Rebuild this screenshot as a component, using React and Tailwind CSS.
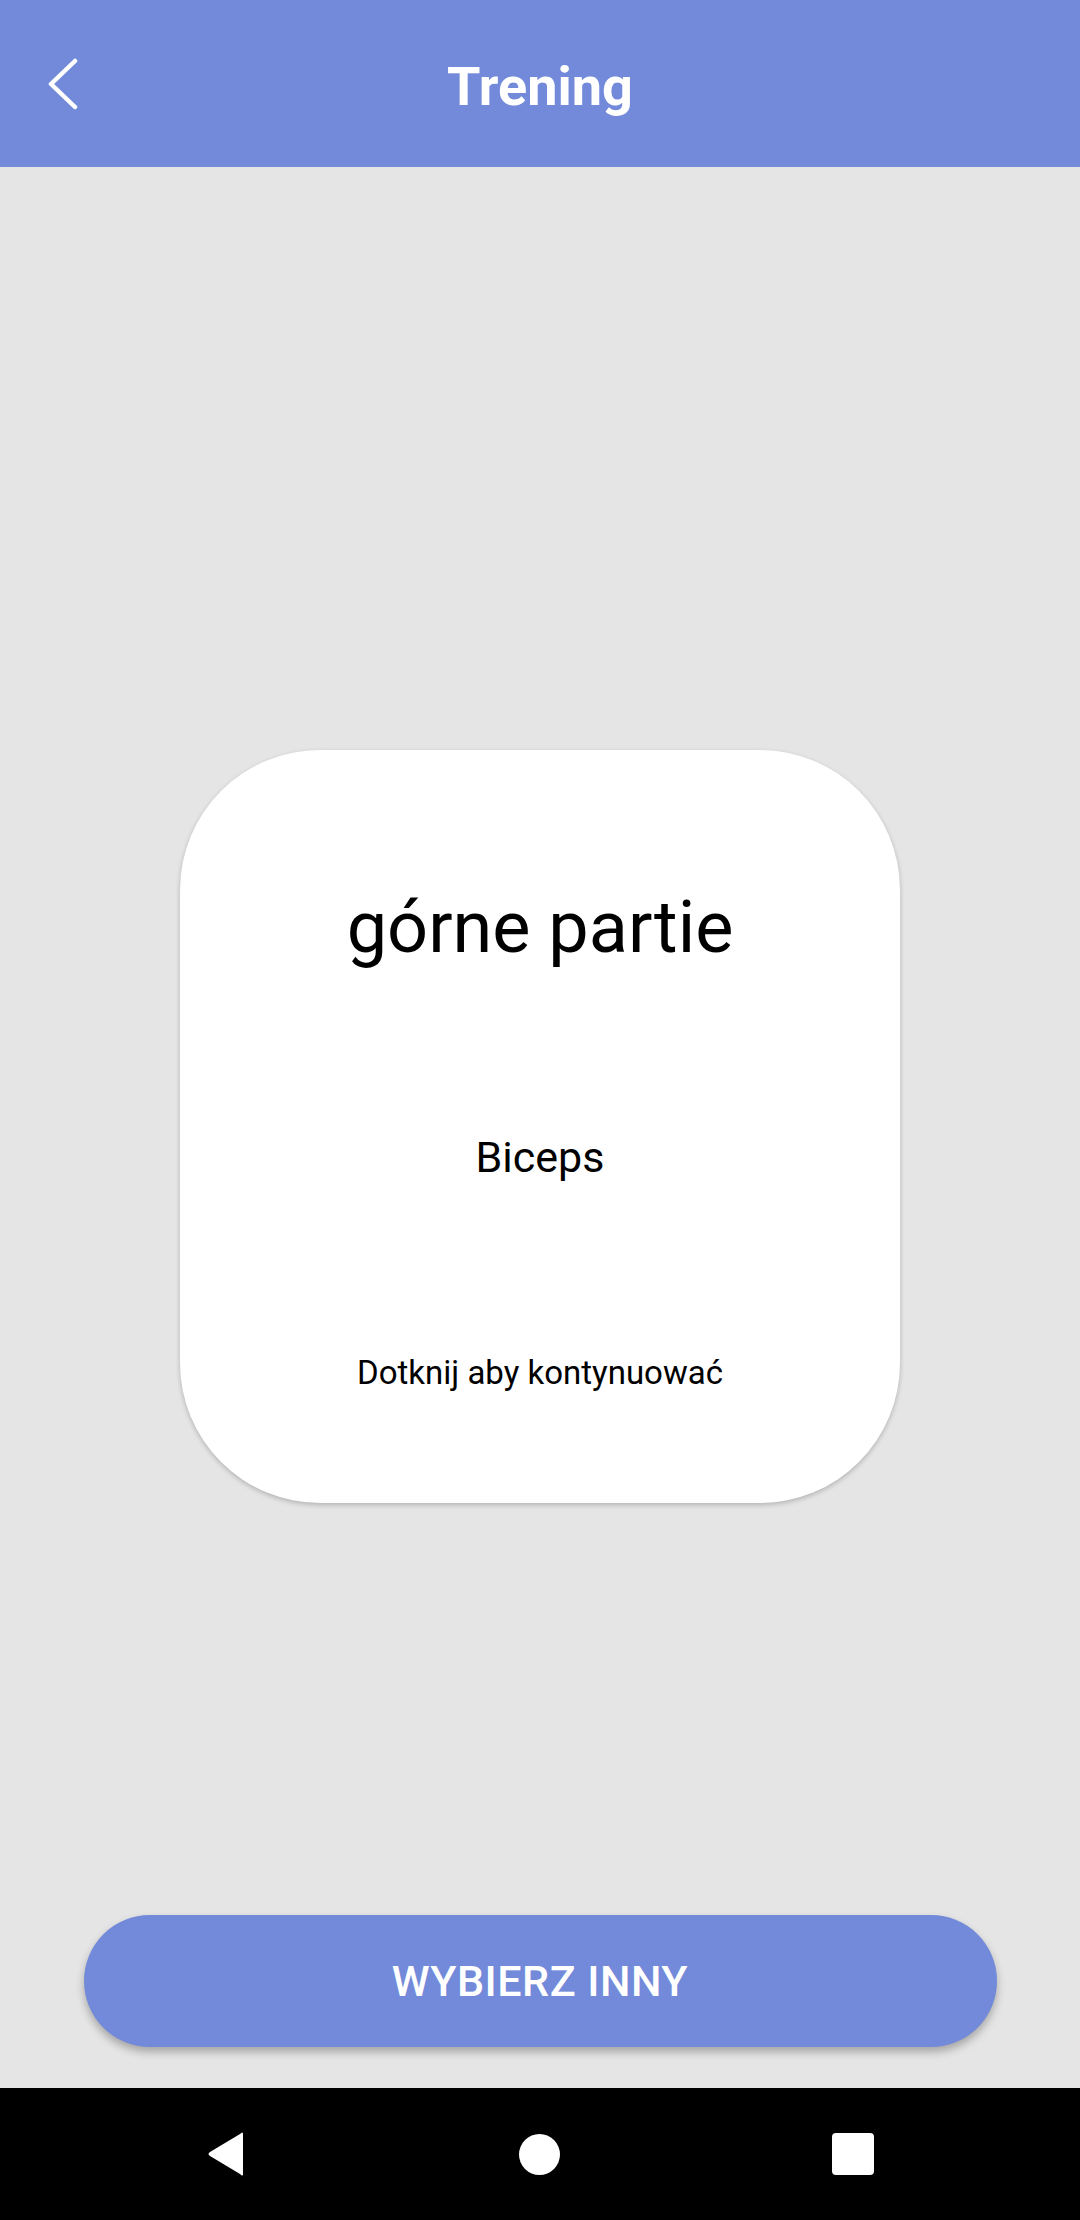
export default function App() {
  return (
    <div
      className="w-[1080px] h-[2220px] flex flex-col bg-[#e5e5e5]"
      style={{ fontFamily: "Roboto, 'Noto Sans', sans-serif" }}
    >
      {/* toolbar */}
      <div className="h-[167px] bg-[#728ad9] flex items-center relative shrink-0">
        <button className="absolute left-[40px] top-[56px] w-[44px] h-[56px] flex items-center justify-center">
          <svg width="36" height="52" viewBox="0 0 36 52" fill="none">
            <polyline
              points="31,3 7,26 31,49"
              stroke="white"
              strokeWidth="4.5"
              strokeLinecap="round"
              strokeLinejoin="round"
            />
          </svg>
        </button>
        <h1 className="w-full text-center text-white font-bold text-[54px] leading-[54px] pt-[6px]">
          Trening
        </h1>
      </div>

      {/* content */}
      <div className="flex-1 flex flex-col items-center">
        <div className="mt-[583px] w-[720px] h-[753px] bg-white rounded-[140px] shadow-[0_2px_5px_rgba(0,0,0,0.22)] flex flex-col items-center text-black">
          <div className="mt-[142px] text-[72px] leading-[72px]">górne partie</div>
          <div className="mt-[172px] text-[43px] leading-[42px]">Biceps</div>
          <div className="mt-[178px] text-[33px] leading-[34px]">Dotknij aby kontynuować</div>
        </div>

        <button className="mt-[412px] w-[913px] h-[132px] rounded-full bg-[#728ad9] shadow-[0_5px_8px_rgba(0,0,0,0.28)] text-white font-medium text-[43px] leading-[43px] tracking-[0.5px]">
          WYBIERZ INNY
        </button>
      </div>

      {/* system nav bar */}
      <div className="h-[132px] bg-black shrink-0 flex items-center">
        <div className="w-full flex justify-between px-[206px] items-center">
          <svg width="40" height="46" viewBox="0 0 40 46">
            <path d="M37 3 L37 43 Q37 46 34 43 L4 25 Q1 23 4 21 L34 3 Q37 0 37 3 Z" fill="white" />
          </svg>
          <div className="w-[41px] h-[41px] rounded-full bg-white" />
          <div className="w-[42px] h-[42px] rounded-[4px] bg-white" />
        </div>
      </div>
    </div>
  );
}
